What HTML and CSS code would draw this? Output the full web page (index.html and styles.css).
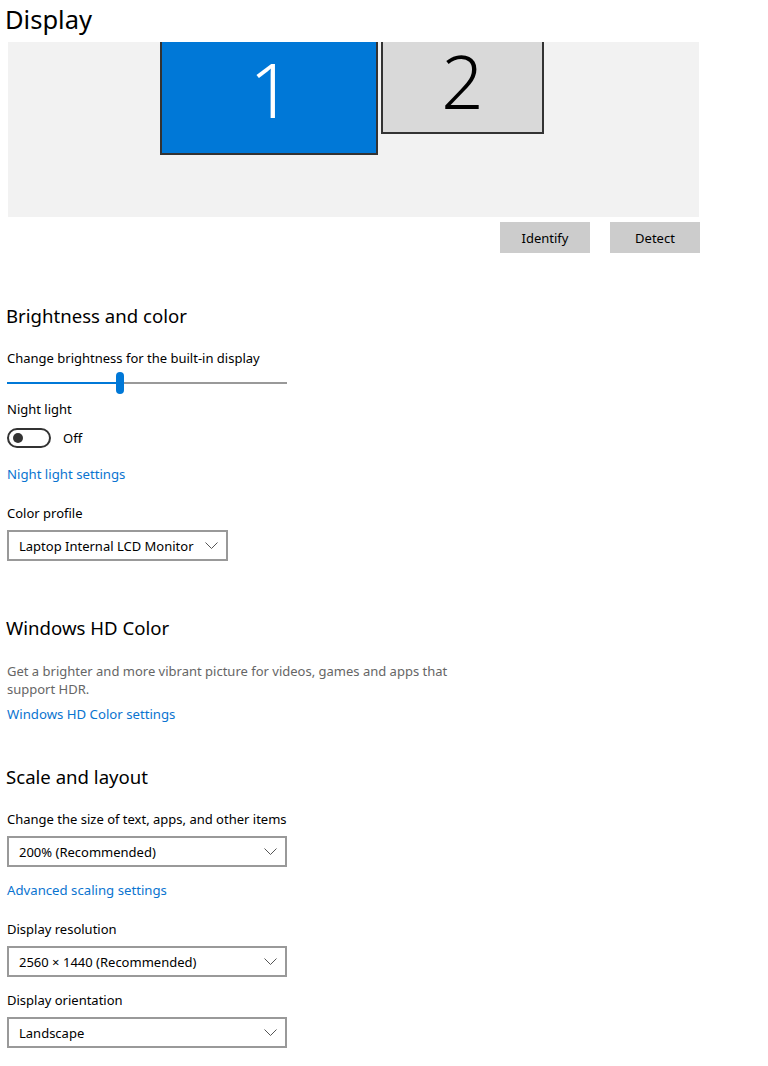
FILE: index.html
```html
<!DOCTYPE html>
<html lang="en">
<head>
<meta charset="utf-8">
<title>Display</title>
<link rel="stylesheet" href="styles.css">
</head>
<body>
<main class="page">
  <h1 class="title">Display</h1>

  <div class="preview">
    <div class="monitor monitor-1"><span>1</span></div>
    <div class="monitor monitor-2"><span>2</span></div>
  </div>
  <div class="preview-actions">
    <button class="btn">Identify</button>
    <button class="btn">Detect</button>
  </div>

  <h2 class="section-title first">Brightness and color</h2>
  <div class="label l-brightness">Change brightness for the built-in display</div>
  <div class="slider">
    <div class="track-fill"></div>
    <div class="thumb"></div>
    <div class="track-rest"></div>
  </div>
  <div class="label l-night">Night light</div>
  <div class="toggle-row">
    <span class="toggle"><span class="knob"></span></span>
    <span class="toggle-text">Off</span>
  </div>
  <a class="link l-nls" href="#">Night light settings</a>
  <div class="label l-profile">Color profile</div>
  <div class="select select-profile">
    <span>Laptop Internal LCD Monitor</span>
    <svg class="chev" width="13" height="7" viewBox="0 0 13 7"><polyline points="0.5,0.5 6.5,6.5 12.5,0.5" fill="none" stroke="#555" stroke-width="1"/></svg>
  </div>

  <h2 class="section-title hd">Windows HD Color</h2>
  <p class="desc">Get a brighter and more vibrant picture for videos, games and apps that support HDR.</p>
  <a class="link l-hd" href="#">Windows HD Color settings</a>

  <h2 class="section-title scale">Scale and layout</h2>
  <div class="label l-size">Change the size of text, apps, and other items</div>
  <div class="select wide">
    <span>200% (Recommended)</span>
    <svg class="chev" width="13" height="7" viewBox="0 0 13 7"><polyline points="0.5,0.5 6.5,6.5 12.5,0.5" fill="none" stroke="#555" stroke-width="1"/></svg>
  </div>
  <a class="link l-adv" href="#">Advanced scaling settings</a>
  <div class="label l-res">Display resolution</div>
  <div class="select wide">
    <span>2560 × 1440 (Recommended)</span>
    <svg class="chev" width="13" height="7" viewBox="0 0 13 7"><polyline points="0.5,0.5 6.5,6.5 12.5,0.5" fill="none" stroke="#555" stroke-width="1"/></svg>
  </div>
  <div class="label l-orient">Display orientation</div>
  <div class="select wide">
    <span>Landscape</span>
    <svg class="chev" width="13" height="7" viewBox="0 0 13 7"><polyline points="0.5,0.5 6.5,6.5 12.5,0.5" fill="none" stroke="#555" stroke-width="1"/></svg>
  </div>
</main>
</body>
</html>
```
FILE: styles.css
```css
* { box-sizing: border-box; }
html, body { margin: 0; padding: 0; background: #fff; }
body {
  font-family: "Noto Sans", "Open Sans", sans-serif;
  font-size: 13px;
  color: #000;
}
.page {
  width: 768px;
  padding-left: 7px;
  display: flex;
  flex-direction: column;
  align-items: flex-start;
}
.title {
  margin: 0 0 0 -2px;
  height: 42px;
  font-size: 25.5px;
  font-weight: 400;
  line-height: 38px;
}
.preview {
  position: relative;
  margin-left: 1px;
  width: 691px;
  height: 175px;
  background: #f2f2f2;
}
.monitor {
  position: absolute;
  top: 0;
  border: 2px solid #333;
  border-top: 0;
  display: flex;
  align-items: center;
  justify-content: center;
  font-weight: 300;
  line-height: 1;
}
.monitor-1 {
  left: 152px;
  width: 218px;
  height: 113px;
  padding-bottom: 17px;
  background: #0078d7;
  color: #fff;
  font-size: 76px;
}
.monitor-1 span { margin-left: 4px; }
.monitor-2 {
  left: 373px;
  width: 163px;
  height: 92px;
  padding-bottom: 12px;
  background: #d9d9d9;
  color: #000;
  font-size: 74px;
}
.preview-actions {
  align-self: stretch;
  display: flex;
  justify-content: flex-end;
  gap: 20px;
  margin-top: 5px;
  padding-right: 68px;
}
.btn {
  width: 90px;
  height: 31px;
  border: 0;
  background: #ccc;
  font: inherit;
  font-size: 13px;
  color: #000;
  padding: 0;
}
.section-title {
  margin: 0 0 0 -1px;
  font-size: 18.6px;
  font-weight: 400;
  line-height: 28px;
}
.section-title.first { margin-top: 49px; }
.section-title.hd { margin-top: 53px; }
.section-title.scale { margin-top: 39px; }
.label { line-height: 20px; }
.l-brightness { margin-top: 18px; }
.slider {
  margin-top: 4px;
  width: 280px;
  height: 22px;
  display: flex;
  align-items: center;
}
.track-fill { width: 109px; height: 2px; background: #0078d7; }
.thumb { width: 8px; height: 22px; border-radius: 4px; background: #0078d7; }
.track-rest { flex: 1; height: 2px; background: #999; }
.l-night { margin-top: 5px; }
.toggle-row {
  margin-top: 9px;
  height: 20px;
  display: flex;
  align-items: center;
  gap: 12px;
}
.toggle {
  width: 44px;
  height: 20px;
  border: 2px solid #333;
  border-radius: 10px;
  display: flex;
  align-items: center;
  padding-left: 4px;
}
.knob { width: 10px; height: 10px; border-radius: 50%; background: #333; }
.toggle-text { line-height: 20px; }
.link {
  display: block;
  color: #0a74d0;
  text-decoration: none;
  line-height: 20px;
  font-size: 13.2px;
}
.l-nls { margin-top: 16px; }
.l-profile { margin-top: 19px; }
.select {
  margin-top: 7px;
  height: 31px;
  border: 2px solid #999;
  display: flex;
  align-items: center;
  justify-content: space-between;
  padding: 0 8px 0 10px;
}
.select-profile { width: 221px; gap: 10px; }
.select.wide { width: 280px; }
.chev { display: block; }
.desc {
  margin: 20px 0 0;
  width: 450px;
  color: #666;
  line-height: 18px;
}
.l-hd { margin-top: 6px; }
.l-size { margin-top: 18px; }
.l-adv { margin-top: 13px; }
.l-res { margin-top: 19px; }
.l-orient { margin-top: 13px; }
```
